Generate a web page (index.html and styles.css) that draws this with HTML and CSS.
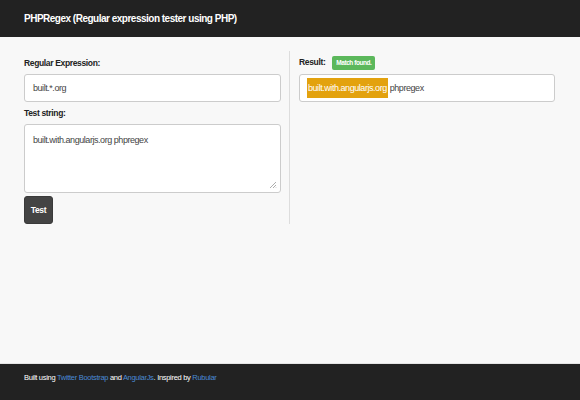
FILE: index.html
```html
<!DOCTYPE html>
<html>
<head>
<meta charset="utf-8">
<link rel="stylesheet" href="styles.css">
</head>
<body>
<header class="topbar"><span class="brand">PHPRegex (Regular expression tester using PHP)</span></header>
<main class="main">
  <section class="col col-left">
    <label class="lbl first">Regular Expression:</label>
    <div class="field">built.*.org</div>
    <label class="lbl">Test string:</label>
    <div class="field area">built.with.angularjs.org phpregex
      <svg class="grip" width="8" height="8" viewBox="0 0 8 8"><path d="M7 1L1 7M7 4L4 7M7 6.5L6.5 7" stroke="#999" stroke-width="0.8"/></svg>
    </div>
    <button class="btn">Test</button>
  </section>
  <section class="col col-right">
    <div class="result-head"><span class="lbl">Result:</span><span class="badge">Match found.</span></div>
    <div class="field result"><span class="hl">built.with.angularjs.org</span> phpregex</div>
  </section>
</main>
<footer class="foot"><span>Built using <a href="#">Twitter Bootstrap</a> and <a href="#">AngularJs</a>. Inspired by <a href="#">Rubular</a></span></footer>
</body>
</html>
```
FILE: styles.css
```css
* { box-sizing: border-box; }
html, body { margin: 0; height: 400px; }
body {
  width: 580px;
  background: #f8f8f8;
  font-family: "Liberation Sans", Arial, sans-serif;
  color: #333;
  display: flex;
  flex-direction: column;
  overflow: hidden;
}
.topbar {
  height: 37px;
  background: #222;
  padding-left: 24px;
  display: flex;
  align-items: center;
}
.brand {
  color: #fff;
  font-weight: bold;
  font-size: 10px;
  letter-spacing: -0.5px;
}
.main {
  flex: 1;
  display: flex;
  padding: 14px 25px 0 24px;
  align-items: flex-start;
}
.col { display: flex; flex-direction: column; }
.col-left {
  width: 266px;
  padding-right: 8px;
  border-right: 1px solid #ddd;
}
.col-right {
  flex: 1;
  padding-left: 9px;
}
.lbl {
  font-weight: bold;
  font-size: 8.5px;
  letter-spacing: -0.35px;
  color: #222;
  height: 20px;
  line-height: 22px;
}
.lbl.first { margin-top: 1px; }
.field {
  background: #fff;
  border: 1px solid #ccc;
  border-radius: 3px;
  height: 28px;
  font-size: 9px;
  letter-spacing: -0.45px;
  color: #444;
  padding: 0 8px;
  display: flex;
  align-items: center;
  margin-top: 2px;
}
.area {
  position: relative;
  height: 69px;
  align-items: flex-start;
  padding-top: 10px;
}
.grip { position: absolute; right: 3px; bottom: 3px; }
.btn {
  margin-top: 3px;
  width: 29px;
  height: 28px;
  background: #444;
  color: #fff;
  border: 1px solid #3a3a3a;
  border-radius: 3px;
  font-family: inherit;
  font-weight: bold;
  font-size: 8.5px;
  letter-spacing: -0.35px;
  padding: 0;
}
.result-head { display: flex; align-items: center; gap: 7px; margin-top: 1px; height: 20px; }
.result-head .lbl { line-height: 20px; }
.badge {
  background: #5cb85c;
  color: #fff;
  font-size: 6.5px;
  font-weight: bold;
  letter-spacing: -0.45px;
  border-radius: 2px;
  height: 14px;
  line-height: 14px;
  padding: 0 4px;
  margin-top: 1px;
}
.result { padding: 0 7px; gap: 2px; }
.hl {
  background: #e3a20e;
  color: #fff;
  height: 20px;
  line-height: 20px;
  padding: 0 1px;
}
.foot {
  height: 37px;
  background: #222;
  border-top: 1px solid #e5e5e5;
  color: #fff;
  font-size: 7.5px;
  letter-spacing: -0.3px;
  padding: 8px 0 0 24px;
  line-height: 12px;
}
.foot a { color: #4a8ad4; text-decoration: none; }
```
